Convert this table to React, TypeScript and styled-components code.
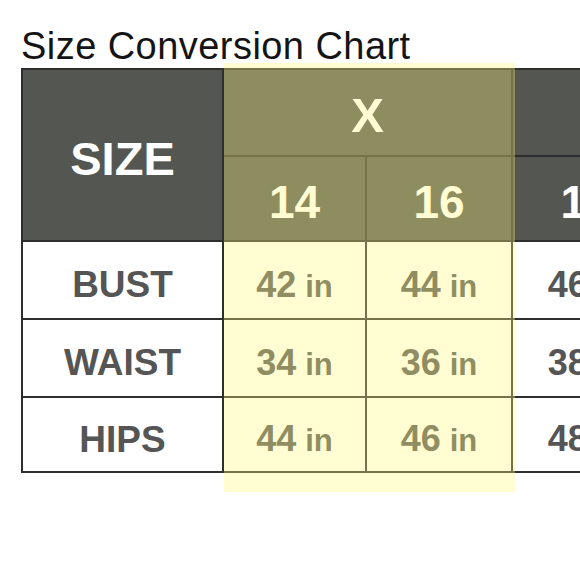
import styled, { createGlobalStyle } from 'styled-components';

const GROUPS = [
  { label: 'X', sizes: ['14', '16'], values: [['42', '44'], ['34', '36'], ['44', '46']] },
  { label: '1X', sizes: ['18', '20'], values: [['46', '48'], ['38', '40'], ['48', '50']] },
];

const MEASURES = ['BUST', 'WAIST', 'HIPS'];

// widths of the size columns, the first group is the highlighted one
const SIZE_WIDTHS = [141, 144, 146, 146];

const GlobalStyle = createGlobalStyle`
  html, body {
    margin: 0;
    padding: 0;
    background: #ffffff;
  }

  body {
    width: 580px;
    height: 580px;
    overflow: hidden;
    font-family: 'Liberation Sans', Arial, sans-serif;
  }
`;

const App = () => {
  return (
    <>
      <GlobalStyle />
      <Page>
        <Title>Size Conversion Chart</Title>
        <ChartWrap>
          <Chart columns={SIZE_WIDTHS}>
            <HeadCell rowSpan={2}>SIZE</HeadCell>
            {GROUPS.map((group) => (
              <GroupCell key={group.label}>{group.label}</GroupCell>
            ))}
            {GROUPS.map((group) =>
              group.sizes.map((size) => <SizeCell key={size}>{size}</SizeCell>),
            )}
            {MEASURES.map((measure, row) => (
              <Row key={measure}>
                <LabelCell>{measure}</LabelCell>
                {GROUPS.map((group) =>
                  group.values[row].map((value, i) => (
                    <ValueCell key={group.label + i}>
                      <Value>
                        {value}
                        <Unit>in</Unit>
                      </Value>
                    </ValueCell>
                  )),
                )}
              </Row>
            ))}
          </Chart>
          <Highlight />
        </ChartWrap>
      </Page>
    </>
  );
};

export default App;

interface ChartProps {
  columns: number[];
}

interface SpanProps {
  rowSpan?: number;
}

const Page = styled.div`
  display: flex;
  flex-direction: column;

  padding: 27px 0 0 21px;
`;

const Title = styled.h1`
  margin: 0 0 3px 0;

  font-size: 38px;
  font-weight: normal;
  line-height: 1;
  letter-spacing: 0.45px;
  color: #141414;
  white-space: nowrap;
`;

const ChartWrap = styled.div`
  position: relative;
  width: max-content;
`;

const Chart = styled.div<ChartProps>`
  display: grid;
  grid-template-columns: 199px ${(props) => props.columns.map((w) => `${w}px`).join(' ')};
  grid-template-rows: 85px 83px 76px 76px 73px;
  gap: 2px;

  padding: 2px;

  background-color: #2e2e2e;
`;

const Row = styled.div`
  display: contents;
`;

const Cell = styled.div`
  display: flex;
  justify-content: center;
  align-items: center;

  font-weight: bold;
  line-height: 1;
  white-space: nowrap;
`;

const HeadCell = styled(Cell)<SpanProps>`
  grid-row: span ${(props) => props.rowSpan ?? 1};

  padding-top: 6px;

  background-color: #545652;

  font-size: 47px;
  color: #ffffff;
`;

const GroupCell = styled(Cell)`
  grid-column: span 2;

  padding-top: 6px;

  background-color: #545652;

  font-size: 49px;
  color: #ffffff;
`;

const SizeCell = styled(Cell)`
  padding-top: 6px;

  background-color: #545652;

  font-size: 46px;
  color: #ffffff;
`;

const LabelCell = styled(Cell)`
  padding-top: 9px;

  background-color: #ffffff;

  font-size: 37px;
  color: #555555;
`;

const ValueCell = styled(Cell)`
  padding-top: 9px;

  background-color: #ffffff;

  font-size: 36px;
  color: #555555;
`;

const Value = styled.span`
  display: inline-block;
`;

const Unit = styled.span`
  margin-left: 9px;

  font-size: 31px;
`;

const Highlight = styled.div`
  position: absolute;
  top: -5px;
  bottom: -19px;
  left: 203px;

  width: 291px;

  background-color: rgba(255, 248, 120, 0.34);

  pointer-events: none;
`;
